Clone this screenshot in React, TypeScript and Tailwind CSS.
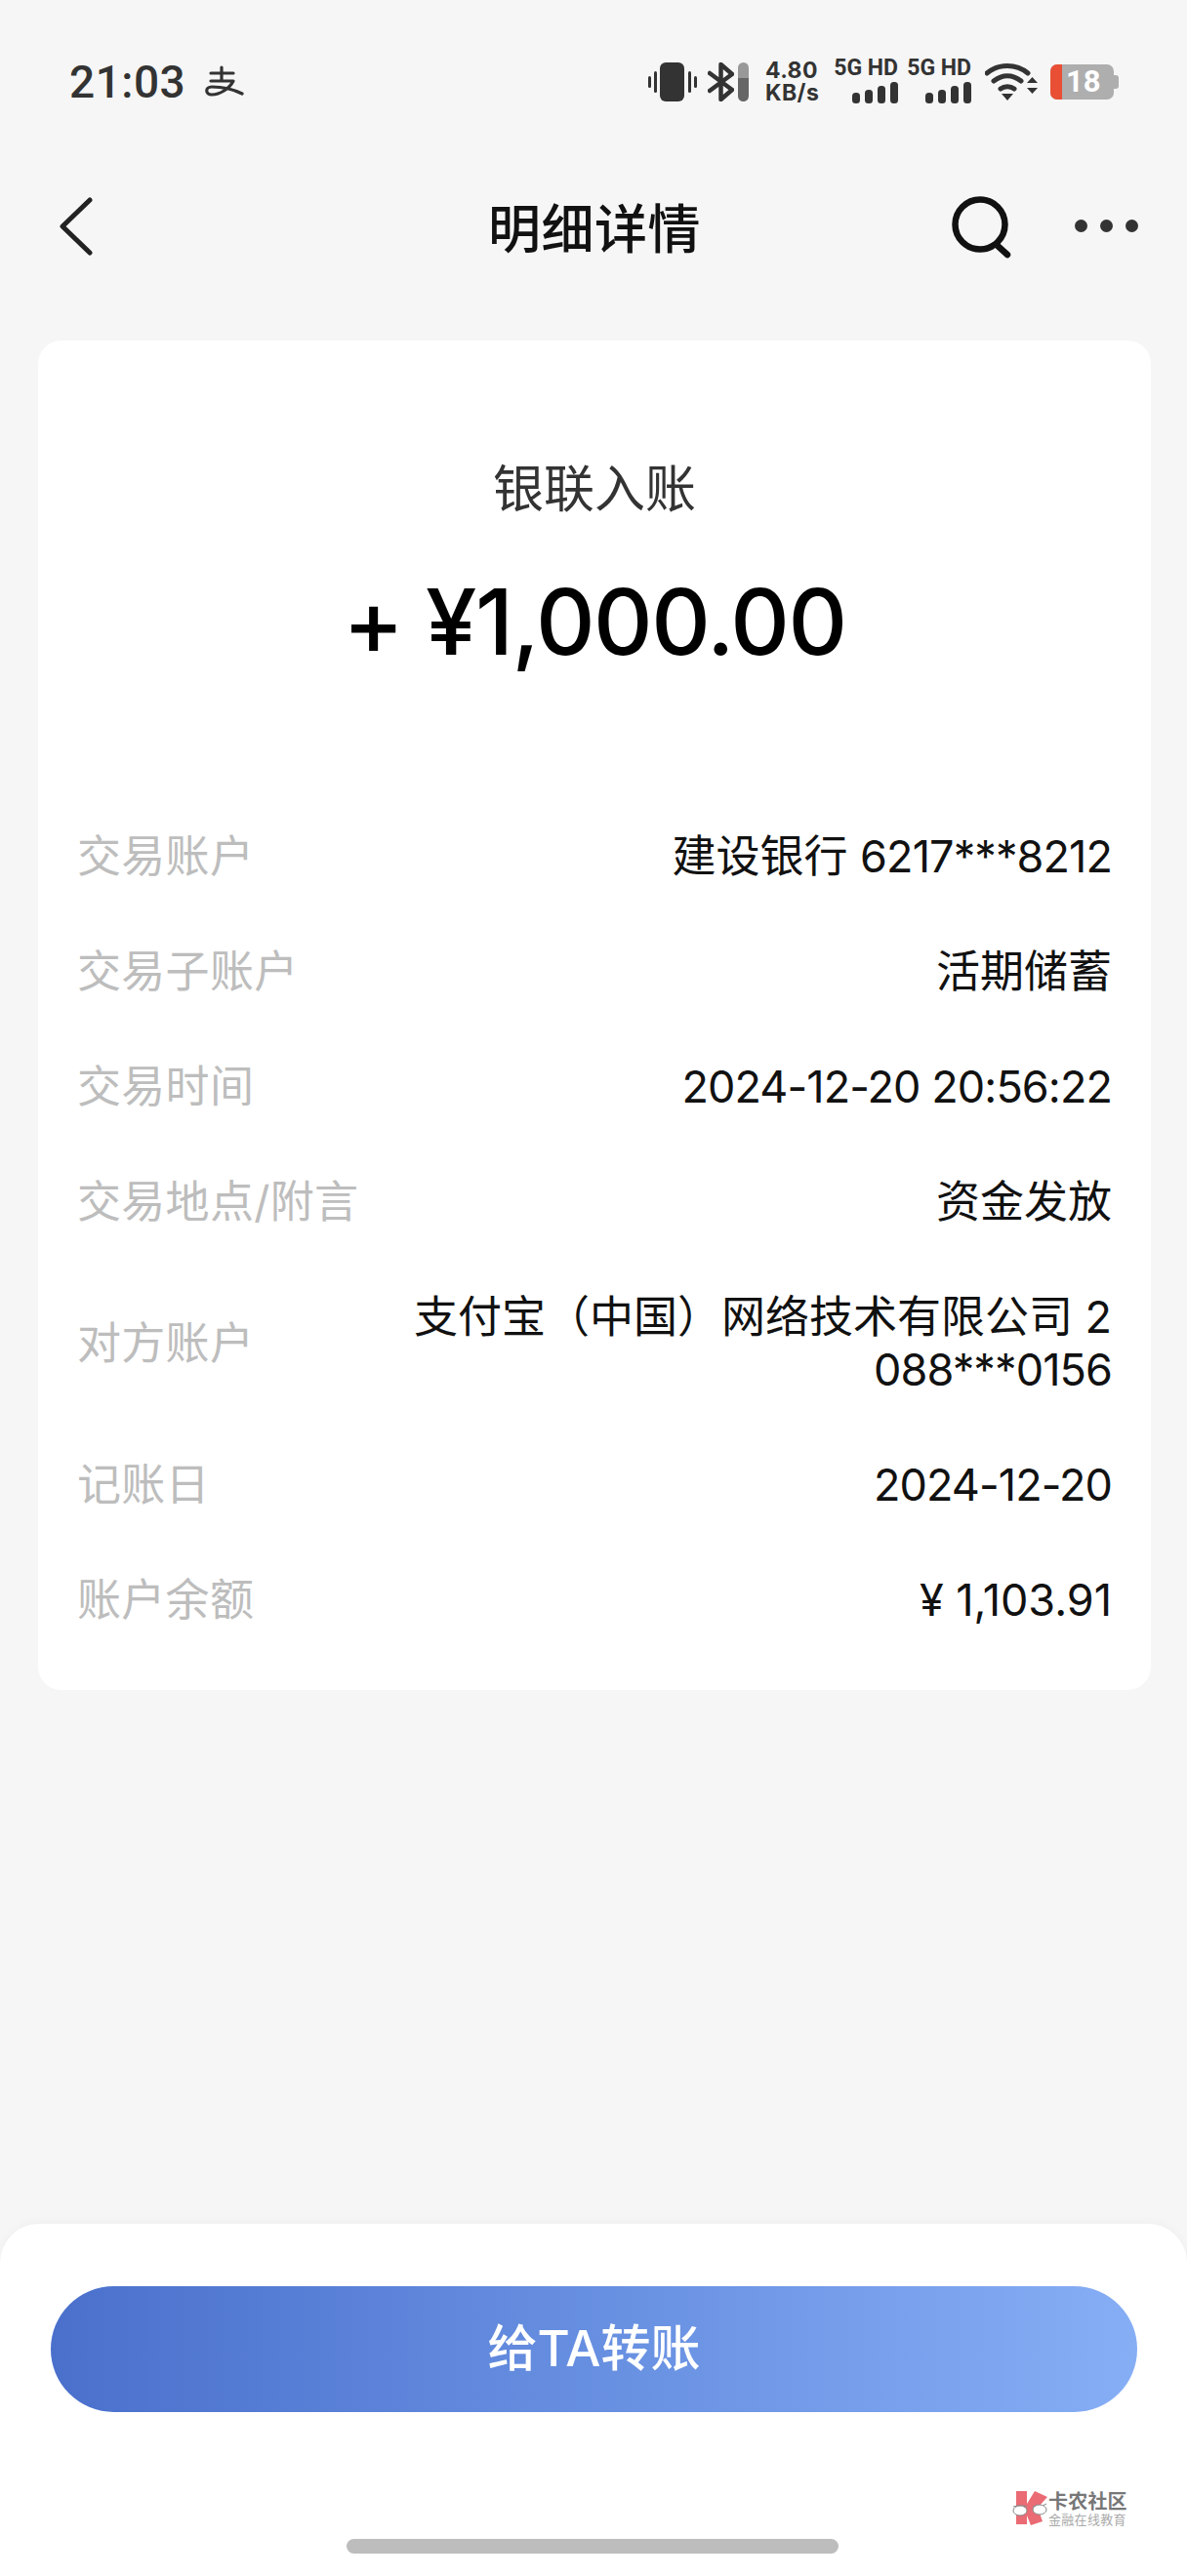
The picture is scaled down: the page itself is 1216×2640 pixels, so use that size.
import type { ReactNode } from "react";

const latin = "font-['Inter','Noto_Sans_CJK_SC',sans-serif]";
const Num = ({ children }: { children: ReactNode }) => <span className="tracking-[-0.9px]">{children}</span>;

const rows: { label: string; value: ReactNode; wrap?: boolean }[] = [
  { label: "交易账户", value: <>建设银行 <Num>6217***8212</Num></> },
  { label: "交易子账户", value: "活期储蓄" },
  { label: "交易时间", value: <Num>2024-12-20 20:56:22</Num> },
  { label: "交易地点/附言", value: "资金发放" },
  { label: "对方账户", value: <>支付宝（中国）网络技术有限公司 2<Num>088***0156</Num></>, wrap: true },
  { label: "记账日", value: <Num>2024-12-20</Num> },
  { label: "账户余额", value: "¥ 1,103.91" },
];

const Signal = () => (
  <svg width="47" height="22" viewBox="0 0 47 22" className="self-end">
    <rect x="0" y="11" width="8" height="11" rx="3.5" fill="#333" />
    <rect x="13" y="8" width="8" height="14" rx="3.5" fill="#333" />
    <rect x="26" y="4" width="8" height="18" rx="3.5" fill="#333" />
    <rect x="39" y="0" width="8" height="22" rx="3.5" fill="#333" />
  </svg>
);

const Sim = () => (
  <div className="flex h-[44px] w-[64px] flex-col items-end justify-between">
    <span className="text-[23px] leading-[15px] font-bold text-[#333] whitespace-nowrap font-['Roboto',sans-serif]">5G HD</span>
    <Signal />
  </div>
);

const StatusBar = () => (
  <div className="flex h-[168px] shrink-0 items-center justify-between pl-[71px] pr-[70px]">
    <div className="flex items-center gap-[20px]">
      <span className="text-[46px] leading-none font-medium tracking-[0.5px] text-[#333] font-['Roboto',sans-serif]">21:03</span>
      <svg width="40" height="34" viewBox="0 0 40 34" fill="none" stroke="#333" strokeWidth="3.2" strokeLinecap="round" strokeLinejoin="round">
        <path d="M6 8H29M17 2V16M6 16H29C25 24 15 30 7 30C0 30 0 22 7 22C16 22 28 24 38 29" />
      </svg>
    </div>
    <div className="flex items-center">
      <svg width="54" height="40" viewBox="0 0 54 40">
        <rect x="12" y="0" width="25" height="40" rx="6" fill="#333" />
        <rect x="0" y="14" width="3" height="12" rx="1.5" fill="#333" />
        <rect x="6" y="9" width="3" height="22" rx="1.5" fill="#333" />
        <rect x="41" y="9" width="3" height="22" rx="1.5" fill="#333" />
        <rect x="47" y="14" width="3" height="12" rx="1.5" fill="#333" />
      </svg>
      <svg width="27" height="40" viewBox="0 0 27 40" fill="none" stroke="#333" strokeWidth="4.5" strokeLinecap="round" strokeLinejoin="round" className="ml-[7px]">
        <path d="M2 11L25 28L13.5 38V2L25 12L2 29" />
      </svg>
      <div className="ml-[4px] flex h-[40px] w-[11px] flex-col overflow-hidden rounded-full">
        <div className="h-[16px] bg-[#999]" />
        <div className="flex-1 bg-[#666]" />
      </div>
      <div className="ml-[17px] flex w-[57px] flex-col text-[23px] leading-[23px] tracking-[0.4px] font-bold text-[#333] font-['Inter',sans-serif]">
        <span>4.80</span>
        <span className="whitespace-nowrap">KB/s</span>
      </div>
      <div className="ml-[15px] flex gap-[11px]">
        <Sim />
        <Sim />
      </div>
      <svg width="54" height="40" viewBox="0 0 54 40" fill="none" className="ml-[14px]">
        <path d="M2 11C14 1 32 1 44 11M9 19C18 12 28 12 37 19M16 27C20 24 26 24 30 27" stroke="#333" strokeWidth="5" strokeLinecap="round" />
        <path d="M17 32H29L23 39Z" fill="#333" />
        <path d="M43 21L48.5 15L54 21ZM43 26H54L48.5 32Z" fill="#333" />
      </svg>
      <div className="ml-[13px] flex h-[36px] items-center">
        <div className="relative flex h-[36px] w-[65px] overflow-hidden rounded-[7px] bg-[#aeaeae]">
          <div className="h-full w-[12px] bg-[#e94f35]" />
          <span className="ml-[4px] text-[31px] leading-[36px] font-bold text-white font-['Roboto',sans-serif]">18</span>
        </div>
        <div className="h-[14px] w-[5px] rounded-r-[3px] bg-[#aeaeae]" />
      </div>
    </div>
  </div>
);

const NavBar = () => (
  <div className="relative flex h-[128px] shrink-0 items-center justify-center">
    <svg width="36" height="60" viewBox="0 0 36 60" fill="none" stroke="#222" strokeWidth="5" strokeLinecap="round" strokeLinejoin="round" className="absolute left-[60px] top-[34px]">
      <path d="M32 3L4 30L32 57" />
    </svg>
    <span className="ml-[2px] text-[54px] leading-none tracking-[0.5px] font-medium text-[#111] font-['Noto_Sans_CJK_SC',sans-serif]">明细详情</span>
    <svg width="66" height="64" viewBox="0 0 66 64" fill="none" stroke="#111" strokeWidth="6.5" strokeLinecap="round" className="absolute left-[973px] top-[33px]">
      <circle cx="31" cy="29" r="25.5" />
      <path d="M48 50L59 60" />
    </svg>
    <div className="absolute left-[1101px] top-[57px] flex gap-[13px]">
      <span className="size-[13px] rounded-full bg-[#333]" />
      <span className="size-[13px] rounded-full bg-[#333]" />
      <span className="size-[13px] rounded-full bg-[#333]" />
    </div>
  </div>
);

const Row = ({ label, value, wrap }: { label: string; value: ReactNode; wrap?: boolean }) => (
  <div className={`flex items-center justify-between ${wrap ? "h-[108px]" : "h-[54px]"} mb-[64px] last:mb-0`}>
    <span className="shrink-0 text-[45px] leading-[54px] tracking-[0.3px] text-[#bdbdbd]">{label}</span>
    <span className={`${wrap ? "w-[730px] break-all" : "whitespace-nowrap"} text-right text-[45px] leading-[54px] text-[#111]`}>{value}</span>
  </div>
);

export default function App() {
  return (
    <div className={`flex h-[2640px] w-[1216px] flex-col overflow-hidden bg-[#f6f6f6] ${latin}`}>
      <StatusBar />
      <NavBar />
      <div className="ml-[39px] mr-[37px] mt-[53px] rounded-[24px] bg-white px-[40px] pt-[125px] pb-[65px]">
        <p className="text-center text-[52px] leading-[56px] text-[#333]">银联入账</p>
        <p className="mt-[52px] text-center text-[94px] leading-[110px] tracking-[-1.5px] font-medium text-black">+ ¥1,000.00</p>
        <div className="mt-[159px]">
          {rows.map((row) => (
            <Row key={row.label} {...row} />
          ))}
        </div>
      </div>
      <div className="relative mt-auto h-[361px] rounded-t-[40px] bg-white pl-[52px] pr-[51px] pt-[64px] shadow-[0_-2px_10px_rgba(0,0,0,0.03)]">
        <button className="h-[129px] w-full rounded-full bg-gradient-to-r from-[#4a70cc] to-[#86aef5] text-[51px] font-medium text-white">
          给TA转账
        </button>
        <div className="absolute left-[1037px] top-[274px] flex items-center">
          <svg width="36" height="36" viewBox="0 0 36 36">
            <path d="M4 0H15V13L23 0L36 6L26 17L31 31L19 35L15 25V34H4Z" fill="#ea6b74" />
            <path d="M1 16L5 15H12L15 16M21 16L24 15H31L35 13" fill="none" stroke="#888" strokeWidth="1" />
            <ellipse cx="8" cy="20" rx="7" ry="5" fill="#fff" stroke="#888" strokeWidth="1" />
            <ellipse cx="28" cy="19" rx="7" ry="5" fill="#fff" stroke="#888" strokeWidth="1" />
          </svg>
          <div className="ml-[1px] flex flex-col">
            <span className="text-[20px] leading-[21px] font-bold tracking-[0.2px] whitespace-nowrap text-[#777]">卡农社区</span>
            <span className="text-[13px] leading-[14px] tracking-[0.3px] whitespace-nowrap text-[#aaa]">金融在线教育</span>
          </div>
        </div>
        <div className="absolute bottom-[23px] left-[355px] h-[15px] w-[504px] rounded-full bg-[#bdbdbd]" />
      </div>
    </div>
  );
}
